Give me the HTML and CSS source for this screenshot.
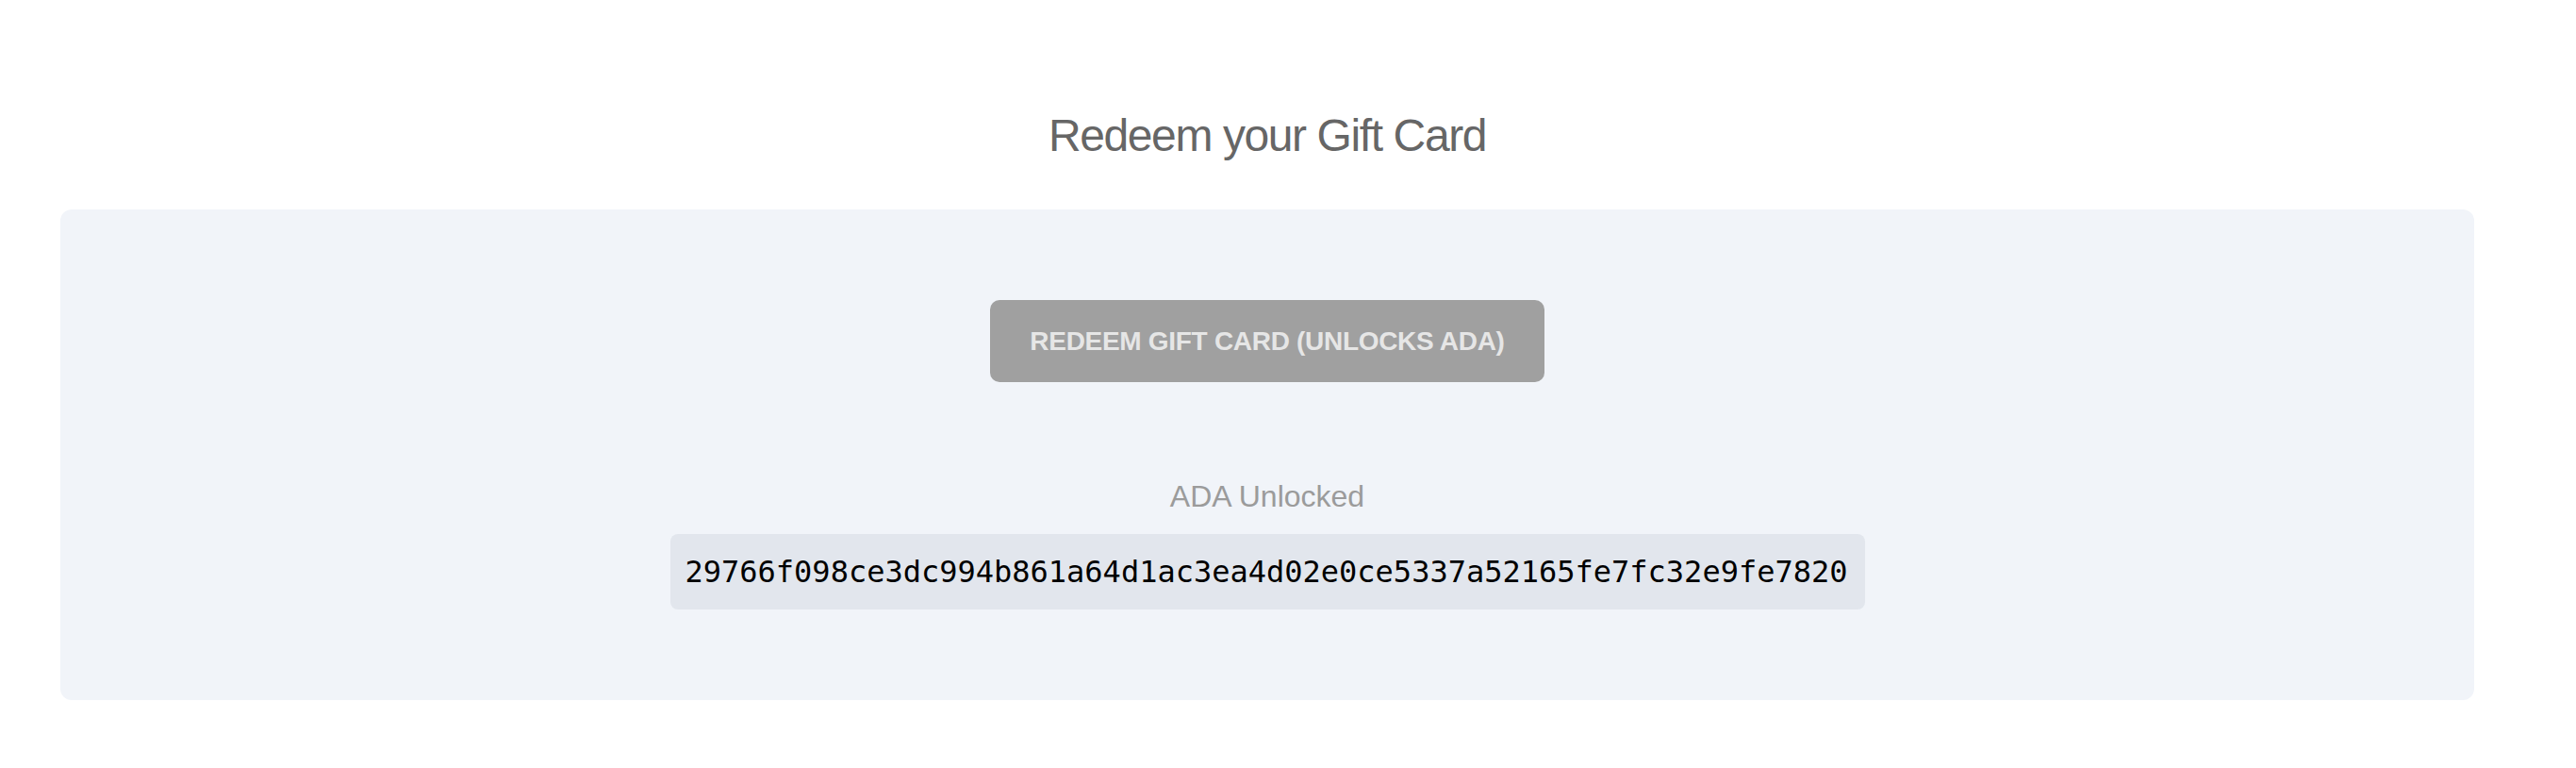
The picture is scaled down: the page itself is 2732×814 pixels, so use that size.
FILE: index.html
```html
<!DOCTYPE html>
<html lang="en">
<head>
<meta charset="utf-8">
<title>Redeem your Gift Card</title>
<link rel="stylesheet" href="styles.css">
</head>
<body>
  <main class="page">
    <h1 class="title">Redeem your Gift Card</h1>
    <section class="card">
      <button class="redeem-btn" type="button" disabled>REDEEM GIFT CARD (UNLOCKS ADA)</button>
      <div class="result">
        <div class="result-label">ADA Unlocked</div>
        <code class="hash">29766f098ce3dc994b861a64d1ac3ea4d02e0ce5337a52165fe7fc32e9fe7820</code>
      </div>
    </section>
  </main>
</body>
</html>
```

FILE: styles.css
```css
html, body {
  margin: 0;
  padding: 0;
  background: #ffffff;
}

body {
  font-family: "Liberation Sans", Arial, sans-serif;
}

.page {
  width: 2560px;
  padding: 116px 0 0 64px;
  display: flex;
  flex-direction: column;
  align-items: stretch;
}

.title {
  margin: 0 0 50px 0;
  font-size: 48px;
  line-height: 56px;
  font-weight: 400;
  letter-spacing: -1.4px;
  color: #666666;
  text-align: center;
}

.card {
  background: #f1f4f9;
  border-radius: 12px;
  padding: 96px 0;
  display: flex;
  flex-direction: column;
  align-items: center;
}

.redeem-btn {
  font-family: "Liberation Sans", Arial, sans-serif;
  font-size: 28px;
  line-height: 39px;
  font-weight: 700;
  letter-spacing: -0.3px;
  color: #e6e6e6;
  background: #a0a0a0;
  border: none;
  border-radius: 10px;
  padding: 24px 42px;
  margin: 0;
  cursor: default;
}

.result {
  margin-top: 97px;
  display: flex;
  flex-direction: column;
  align-items: center;
  gap: 16px;
}

.result-label {
  font-size: 32px;
  line-height: 48px;
  color: #9b9b9b;
}

.hash {
  display: block;
  font-family: "DejaVu Sans Mono", "Liberation Mono", monospace;
  font-size: 32px;
  line-height: 48px;
  color: #000000;
  background: #e2e6ed;
  border-radius: 8px;
  padding: 16px 18px 16px 16px;
}
```
